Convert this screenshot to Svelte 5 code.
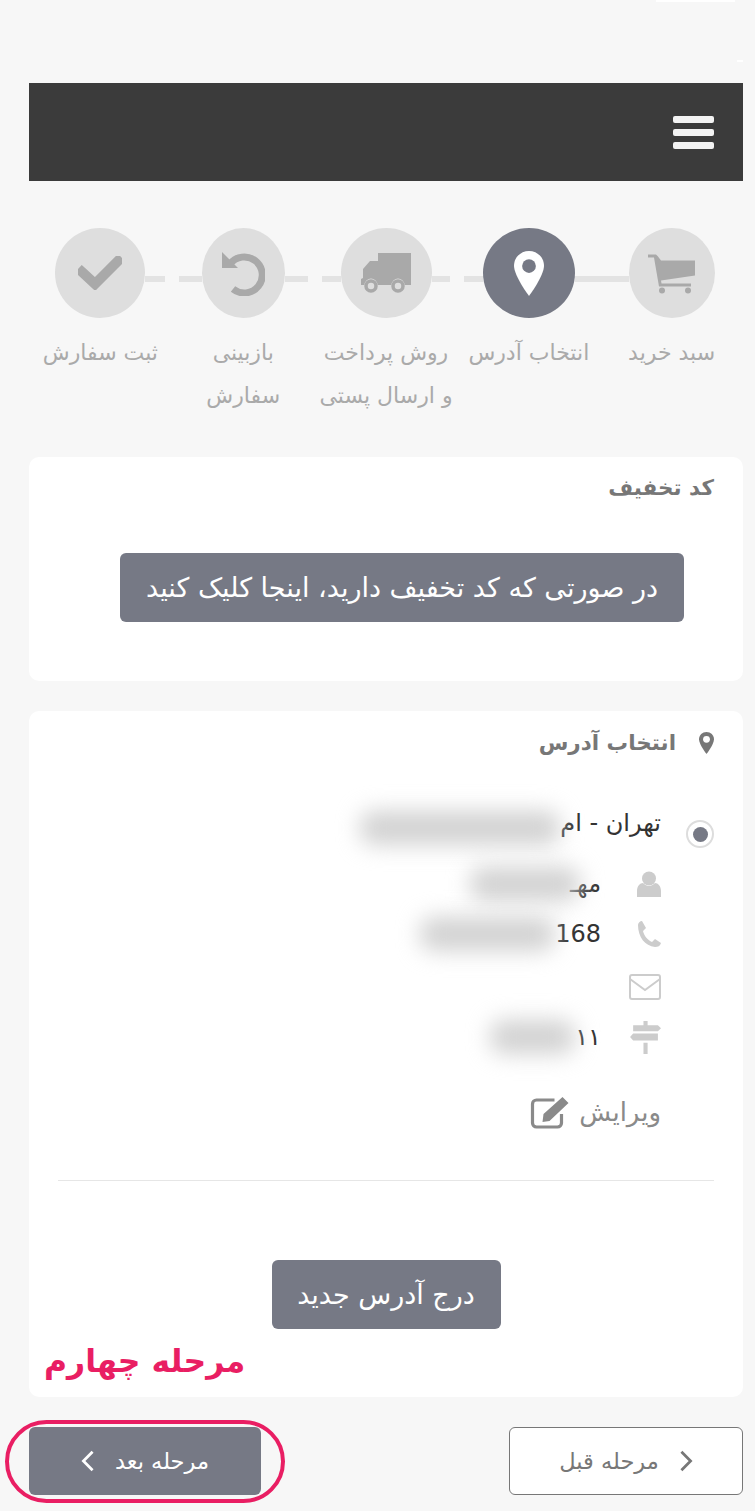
<script>
  const steps = [
    { label: "سبد خرید", w: 86, icon: "cart", lineEnd: true },
    { label: "انتخاب آدرس", w: 92, icon: "marker", active: true, lineStart: true },
    { label: "روش پرداخت و ارسال پستی", w: 91, icon: "truck" },
    { label: "بازبینی سفارش", w: 83, icon: "undo" },
    { label: "ثبت سفارش", w: 90, icon: "check", last: true },
  ];
</script>

{#snippet marker(color, hole)}
  <svg class="fill" viewBox="0 0 24 36" preserveAspectRatio="none" style="color: {color}">
    <path d="M12 0C5.4 0 0 5.2 0 11.8 0 20 12 36 12 36s12-16 12-24.200C24 5.200 18.600 0 12 0z" />
    <ellipse cx="12" cy="12" rx="5.500" ry="5.500" fill={hole} />
  </svg>
{/snippet}

<div class="page" dir="rtl">
  <div class="topline"></div>
  <div class="topdot"></div>

  <header class="bar">
    <div class="burger"><span></span><span></span><span></span></div>
  </header>

  <div class="steps">
    {#each steps as s, i}
      <div class="step">
        <div class="track">
          <span class="line" class:hide={i === 0} class:join-start={s.lineStart}></span>
          <div class="circle" class:active={s.active} style="width: {s.w}px">
            {#if s.icon === "cart"}
              <svg class="ic-cart" viewBox="0 0 48 40">
                <path d="M0 1h8l2 2 3 4h34v15L13 27l.5 3H43v3H11L6 4H0z" fill="#a9a9a9" />
                <rect x="11" y="34" width="6" height="6" rx="3" fill="#a9a9a9" />
                <rect x="37" y="34" width="6" height="6" rx="3" fill="#a9a9a9" />
              </svg>
            {:else if s.icon === "marker"}
              <div class="ic-marker">{@render marker("#fff", "#767985")}</div>
            {:else if s.icon === "truck"}
              <svg class="ic-truck" viewBox="0 0 50 40">
                <path d="M17 0h33v32h-6.500a6.500 6.500 0 0 0-13 0H16.500a6.500 6.500 0 0 0-13 0H0v-6l2-1v-9l7-8h8z" fill="#a9a9a9" />
                <circle cx="10" cy="33" r="5" fill="none" stroke="#a9a9a9" stroke-width="3.500" />
                <circle cx="37" cy="33" r="5" fill="none" stroke="#a9a9a9" stroke-width="3.500" />
              </svg>
            {:else if s.icon === "undo"}
              <svg class="ic-undo" viewBox="0 0 44 45">
                <path d="M9 13A18 18 0 1 1 12 38" fill="none" stroke="#a9a9a9" stroke-width="7" />
                <path d="M1 1l16 16H1z" fill="#a9a9a9" />
              </svg>
            {:else}
              <svg class="ic-check" viewBox="0 0 44 34">
                <path d="M4 16l13 12L40 5" fill="none" stroke="#a9a9a9" stroke-width="10" stroke-linecap="square" />
              </svg>
            {/if}
          </div>
          <span class="line" class:hide={s.last} class:join-end={s.lineEnd}></span>
        </div>
        <div class="label">{s.label}</div>
      </div>
    {/each}
  </div>

  <section class="card discount">
    <h2 class="title">کد تخفیف</h2>
    <div class="discount-row">
      <button class="btn wide">در صورتی که کد تخفیف دارید، اینجا کلیک کنید</button>
    </div>
  </section>

  <section class="card address">
    <h2 class="title addr-title">
      <span class="title-pin">{@render marker("#777", "#fff")}</span>
      انتخاب آدرس
    </h2>

    <div class="addr">
      <div class="radio"><span></span></div>
      <div class="addr-body">
        <div class="addr-line">
          <span>تهران - ام</span><span class="blob first" style="width: 200px"></span>
        </div>

        <div class="row">
          <svg class="ri" viewBox="0 0 24 26" preserveAspectRatio="xMaxYMid"><circle cx="12" cy="7.500" r="7" /><path d="M0 26v-6c0-5 3-8 6-8 2 2 4 3 6 3s4-1 6-3c3 0 6 3 6 8v6z" /></svg>
          <span>مهـ</span><span class="blob over" style="width: 110px"></span>
        </div>
        <div class="row">
          <svg class="ri" viewBox="0 0 24 26" preserveAspectRatio="xMaxYMid"><path d="M5 0l4 7-3 3c1 5 5 9 9 11l3-3 6 4c-1 3-3 4-6 4C8 25 1 16 1 4c0-2 2-4 4-4z" /></svg>
          <span dir="ltr">168</span><span class="blob" style="width: 135px"></span>
        </div>
        <div class="row mail">
          <svg class="ri" viewBox="0 0 32 26"><rect x="1" y="1" width="30" height="24" rx="2" fill="none" stroke="#ccc" stroke-width="2" /><path d="M1 5l15 11L31 5" fill="none" stroke="#ccc" stroke-width="2" /></svg>
        </div>
        <div class="row">
          <svg class="ri sign" viewBox="0 0 30 32" preserveAspectRatio="xMaxYMid"><path d="M13 0h4v4h10l3 3-3 3H3V4h10zM3 12h24v7l-24 0-3-3.500zM13 21h4v11h-4z" /></svg>
          <span>۱۱</span><span class="blob" style="width: 85px"></span>
        </div>

        <div class="edit">
          <span>ویرایش</span>
          <svg viewBox="0 0 40 34">
            <path d="M31 19v9a4 4 0 0 1-4 4H6a4 4 0 0 1-4-4V9a4 4 0 0 1 4-4h18" fill="none" stroke="#8a8a8a" stroke-width="3.200" />
            <path d="M13 19L32 2l6 6-19 18-7 1zM14 21l4 4" fill="#8a8a8a" />
          </svg>
        </div>
      </div>
    </div>

    <hr />

    <div class="new-row"><button class="btn">درج آدرس جدید</button></div>
    <div class="note">مرحله چهارم</div>
  </section>

  <nav class="pager">
    <button class="prev">
      <svg viewBox="0 0 14 24"><path d="M2 2l10 10L2 22" fill="none" stroke="currentColor" stroke-width="3" /></svg>
      مرحله قبل
    </button>
    <div class="next-wrap">
      <button class="next">
        مرحله بعد
        <svg viewBox="0 0 14 24"><path d="M12 2L2 12l10 10" fill="none" stroke="currentColor" stroke-width="3" /></svg>
      </button>
    </div>
  </nav>
</div>

<style>
  :global(body) {
    margin: 0;
    background: #f7f7f7;
  }
  .page {
    width: 755px;
    height: 1511px;
    box-sizing: border-box;
    padding: 0 12px 0 29px;
    overflow: hidden;
    font-family: "DejaVu Sans", sans-serif;
    color: #333;
  }
  .topline {
    width: 79px;
    height: 2px;
    margin-right: 8px;
    background: #fff;
  }
  .topdot {
    width: 6px;
    height: 2px;
    margin-top: 58px;
    background: #fff;
  }
  .bar {
    height: 98px;
    margin-top: 21px;
    background: #3b3b3b;
    display: flex;
    align-items: center;
    padding: 0 29px;
  }
  .burger {
    display: flex;
    flex-direction: column;
    gap: 6px;
  }
  .burger span {
    display: block;
    width: 41px;
    height: 7px;
    border-radius: 2px;
    background: #f3f3f3;
  }

  .steps {
    display: grid;
    grid-template-columns: repeat(5, 1fr);
    margin-top: 47px;
    height: 229px;
  }
  .step {
    display: flex;
    flex-direction: column;
    align-items: center;
  }
  .track {
    display: grid;
    grid-template-columns: 1fr auto 1fr;
    align-items: center;
    width: 100%;
    height: 90px;
    box-sizing: border-box;
    padding: 0 7px;
  }
  .line {
    height: 6px;
    margin-top: 12px;
    background: #e3e3e3;
  }
  .line.hide {
    visibility: hidden;
  }
  .line.join-start {
    margin-right: -7px;
  }
  .line.join-end {
    margin-left: -7px;
  }
  .circle {
    height: 90px;
    border-radius: 50%;
    background: #dedede;
    display: flex;
    align-items: center;
    justify-content: center;
  }
  .circle.active {
    background: #767985;
  }
  .ic-cart { width: 48px; height: 41px; }
  .ic-marker { width: 30px; height: 45px; }
  .ic-truck { width: 50px; height: 40px; }
  .ic-undo { width: 44px; height: 45px; }
  .ic-check { width: 44px; height: 34px; }
  .fill {
    display: block;
    width: 100%;
    height: 100%;
    fill: currentColor;
  }
  .label {
    margin-top: 13px;
    width: 134px;
    font-size: 22px;
    line-height: 43px;
    text-align: center;
    color: #aaa;
  }

  .card {
    background: #fff;
    border-radius: 10px;
    padding: 0 29px;
  }
  .title {
    margin: 0;
    font-size: 21.500px;
    font-weight: 700;
    color: #777;
    height: 62px;
    line-height: 62px;
  }
  .discount {
    height: 224px;
  }
  .discount-row {
    margin-top: 34px;
    padding-right: 30px;
  }
  .btn {
    height: 69px;
    border: 0;
    border-radius: 6px;
    background: #767985;
    color: #fff;
    font: inherit;
    font-size: 27px;
    padding: 0 26px;
  }
  .btn.wide {
    width: 564px;
    padding: 0;
    white-space: nowrap;
  }

  .address {
    position: relative;
    height: 686px;
    margin-top: 30px;
  }
  .addr-title {
    display: flex;
    align-items: center;
    gap: 23px;
    height: 64px;
    line-height: 64px;
  }
  .title-pin {
    width: 15px;
    height: 22px;
  }
  .addr {
    display: flex;
    gap: 25px;
    margin-top: 25px;
  }
  .radio {
    width: 24px;
    height: 24px;
    margin-top: 20px;
    flex: none;
    border: 2px solid #ddd;
    border-radius: 50%;
    display: flex;
    align-items: center;
    justify-content: center;
  }
  .radio span {
    width: 15px;
    height: 15px;
    border-radius: 50%;
    background: #767985;
  }
  .addr-body {
    flex: 1;
    font-size: 24px;
  }
  .addr-line {
    display: flex;
    align-items: center;
    height: 46px;
    margin-bottom: 13px;
  }
  .row {
    display: flex;
    align-items: center;
    height: 50px;
  }
  .row.mail {
    margin-top: 3px;
  }
  .ri {
    width: 32px;
    height: 26px;
    flex: none;
    margin-left: 28px;
    fill: #ccc;
  }
  .ri.sign {
    height: 33px;
  }
  .blob {
    height: 34px;
    flex: none;
    background: #d2d2d2;
    filter: blur(11px);
    border-radius: 14px;
  }
  .blob.first {
    margin-top: 10px;
  }
  .blob.over {
    margin-right: -10px;
  }
  .edit {
    display: flex;
    align-items: center;
    gap: 8px;
    margin-top: 25px;
    height: 50px;
    font-size: 26px;
    color: #8a8a8a;
  }
  .edit svg {
    width: 41px;
    height: 34px;
  }
  hr {
    border: 0;
    border-top: 1px solid #e6e6e6;
    margin: 43px 0 0;
  }
  .new-row {
    margin-top: 79px;
    display: flex;
    justify-content: center;
  }
  .new-row .btn {
    width: 229px;
    padding: 0;
  }
  .note {
    position: absolute;
    left: 15px;
    bottom: 8px;
    font-size: 31.500px;
    line-height: 56px;
    font-weight: 700;
    color: #e91e63;
  }

  .pager {
    display: flex;
    justify-content: space-between;
    margin-top: 30px;
  }
  .pager button {
    height: 68px;
    border-radius: 6px;
    font: inherit;
    font-size: 22.500px;
    display: flex;
    align-items: center;
    justify-content: center;
    gap: 20px;
  }
  .pager svg {
    width: 14px;
    height: 22px;
  }
  .prev {
    width: 234px;
    border: 1px solid #777;
    background: #fff;
    color: #777;
  }
  .next-wrap {
    position: relative;
  }
  .next-wrap::after {
    content: "";
    position: absolute;
    inset: -7px -24px -8px -24px;
    border: 4px solid #e91e63;
    border-radius: 42px;
  }
  .next {
    width: 232px;
    border: 0;
    background: #767985;
    color: #fff;
  }
</style>
